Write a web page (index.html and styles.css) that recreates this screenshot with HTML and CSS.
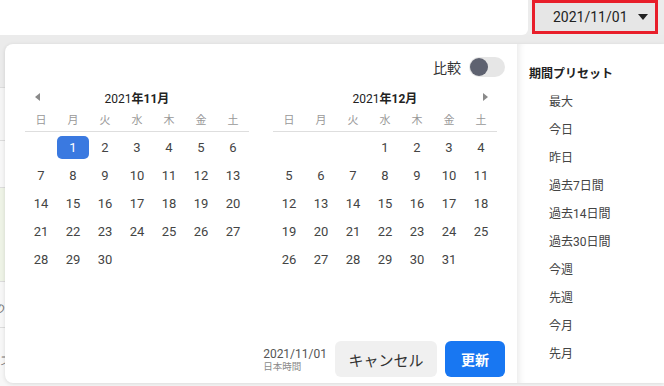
FILE: index.html
```html
<!DOCTYPE html>
<html lang="ja">
<head>
<meta charset="utf-8">
<link rel="stylesheet" href="styles.css">
</head>
<body>
<div class="page">
  <header class="topbar">
    <div class="search"></div>
    <button class="datebtn"><span>2021/11/01</span><svg width="10" height="6" viewBox="0 0 10 6"><path d="M0 0H10L5 6Z" fill="#222"/></svg></button>
  </header>
  <div class="rows">
    <div class="row r1"></div>
    <div class="row r2"></div>
    <div class="row r3"></div>
    <div class="row r4"></div>
    <div class="row r5"><span class="frag">データの</span></div>
    <div class="row r6"><span class="frag">グラフ</span></div>
  </div>
</div>

<div class="popup">
  <div class="calarea">
    <div class="cmp"><span>比較</span><span class="toggle"><span class="knob"></span></span></div>
    <div class="months">
      <div class="month">
        <div class="mhead"><svg class="nav prev" width="5" height="8" viewBox="0 0 5 8"><path d="M5 0V8L0 4Z" fill="#8a8a8a"/></svg><span class="mtitle">2021<b>年11月</b></span></div>
        <div class="grid dow"><span>日</span><span>月</span><span>火</span><span>水</span><span>木</span><span>金</span><span>土</span></div>
        <div class="grid days">
          <span></span><span><i class="sel">1</i></span><span>2</span><span>3</span><span>4</span><span>5</span><span>6</span>
          <span>7</span><span>8</span><span>9</span><span>10</span><span>11</span><span>12</span><span>13</span>
          <span>14</span><span>15</span><span>16</span><span>17</span><span>18</span><span>19</span><span>20</span>
          <span>21</span><span>22</span><span>23</span><span>24</span><span>25</span><span>26</span><span>27</span>
          <span>28</span><span>29</span><span>30</span>
        </div>
      </div>
      <div class="month">
        <div class="mhead"><span class="mtitle">2021<b>年12月</b></span><svg class="nav next" width="5" height="8" viewBox="0 0 5 8"><path d="M0 0V8L5 4Z" fill="#8a8a8a"/></svg></div>
        <div class="grid dow"><span>日</span><span>月</span><span>火</span><span>水</span><span>木</span><span>金</span><span>土</span></div>
        <div class="grid days">
          <span></span><span></span><span></span><span>1</span><span>2</span><span>3</span><span>4</span>
          <span>5</span><span>6</span><span>7</span><span>8</span><span>9</span><span>10</span><span>11</span>
          <span>12</span><span>13</span><span>14</span><span>15</span><span>16</span><span>17</span><span>18</span>
          <span>19</span><span>20</span><span>21</span><span>22</span><span>23</span><span>24</span><span>25</span>
          <span>26</span><span>27</span><span>28</span><span>29</span><span>30</span><span>31</span>
        </div>
      </div>
    </div>
    <div class="footer">
      <div class="fdate"><span class="fd">2021/11/01</span><span class="tz">日本時間</span></div>
      <button class="btn cancel">キャンセル</button>
      <button class="btn update">更新</button>
    </div>
  </div>
  <aside class="presets">
    <div class="phead">期間プリセット</div>
    <ul class="plist">
      <li>最大</li>
      <li>今日</li>
      <li>昨日</li>
      <li>過去7日間</li>
      <li>過去14日間</li>
      <li>過去30日間</li>
      <li>今週</li>
      <li>先週</li>
      <li>今月</li>
      <li>先月</li>
    </ul>
  </aside>
</div>
</body>
</html>
```
FILE: styles.css
```css
* { box-sizing: border-box; }
html, body {
  margin: 0;
  padding: 0;
}
body {
  width: 664px;
  height: 386px;
  overflow: hidden;
  position: relative;
  background: #ececec;
  font-family: Roboto, "Noto Sans CJK JP", sans-serif;
  color: #333;
}

/* background page */
.topbar {
  display: flex;
  gap: 4px;
  height: 35px;
}
.search {
  width: 528px;
  height: 35px;
  background: #fff;
  border-bottom-right-radius: 6px;
}
.datebtn {
  width: 126px;
  height: 34px;
  border: 3px solid #e81e2a;
  background: #e6e6e6;
  display: flex;
  align-items: center;
  justify-content: space-between;
  padding: 0 7px 0 18px;
  font-family: Roboto, sans-serif;
  font-size: 14px;
  color: #222;
  margin: 0;
}
.rows { display: flex; flex-direction: column; }
.row { border-bottom: 1px solid #dcdcdc; }
.r1 { height: 53px; background: #ebebeb; }
.r2 { height: 53px; background: #f5f5f5; }
.r3 { height: 47px; background: #f7f7f7; }
.r4 { height: 94px; background: #eef3e6; }
.r5 { height: 46px; background: #f7f7f7; padding-top: 21px; }
.r6 { height: 58px; background: #f7f7f7; padding-top: 27px; border-bottom: none; }
.frag {
  display: block;
  font-size: 12px;
  font-style: italic;
  color: #777;
  margin-left: -44px;
  line-height: 12px;
}
.r6 .frag { margin-left: -26px; }

/* popup */
.popup {
  position: absolute;
  left: 5px;
  top: 44px;
  right: 0;
  height: 339px;
  background: #fff;
  border-radius: 8px 0 0 8px;
  box-shadow: 0 1px 4px rgba(0, 0, 0, 0.12);
  display: flex;
}
.calarea {
  width: 512px;
  display: flex;
  flex-direction: column;
  padding: 13px 12px 6px 20px;
}
.cmp {
  display: flex;
  justify-content: flex-end;
  align-items: center;
  gap: 8px;
  height: 20px;
  font-size: 14px;
  color: #333;
}
.toggle {
  width: 36px;
  height: 20px;
  border-radius: 10px;
  background: #e6e6e6;
  display: flex;
  align-items: center;
  padding-left: 1px;
}
.knob {
  width: 18px;
  height: 18px;
  border-radius: 50%;
  background: #5e6270;
}
.months {
  display: flex;
  gap: 24px;
  margin-top: 9px;
}
.month { width: 224px; }
.mhead {
  position: relative;
  height: 22px;
  display: flex;
  align-items: center;
  justify-content: center;
  font-size: 12px;
  color: #222;
}
.mhead b { font-weight: 700; }
.nav { position: absolute; top: 7px; }
.prev { left: 10px; }
.next { right: 9px; }
.grid {
  display: grid;
  grid-template-columns: repeat(7, 32px);
}
.dow {
  height: 24px;
  border-bottom: 1px solid #dedede;
  font-size: 11px;
  color: #999;
  align-items: center;
  text-align: center;
  padding-bottom: 1px;
}
.days {
  padding-top: 1px;
  grid-auto-rows: 28px;
  font-size: 13px;
  color: #444;
}
.days span {
  display: flex;
  align-items: center;
  justify-content: center;
}
.sel {
  font-style: normal;
  width: 32px;
  height: 23px;
  border-radius: 5px;
  background: #3a79e0;
  color: #fff;
  display: flex;
  align-items: center;
  justify-content: center;
  margin-top: 1px;
}
.footer {
  margin-top: auto;
  display: flex;
  justify-content: flex-end;
  align-items: center;
  gap: 8px;
}
.fdate {
  display: flex;
  flex-direction: column;
  line-height: 13px;
  padding-top: 1px;
}
.fd { font-size: 12px; color: #555; }
.tz { font-size: 9.5px; color: #8a8a8a; line-height: 11px; }
.btn {
  height: 36px;
  border: none;
  border-radius: 6px;
  font-family: Roboto, "Noto Sans CJK JP", sans-serif;
  font-size: 14px;
  margin: 0;
}
.cancel {
  width: 102px;
  background: #f0f0f0;
  color: #333;
  font-size: 15px;
}
.update {
  width: 60px;
  background: #1877f2;
  color: #fff;
  font-weight: 700;
}

/* presets */
.presets {
  flex: 1;
  box-shadow: inset 7px 0 7px -5px rgba(0, 0, 0, 0.09);
  padding: 16px 0 0 12px;
}
.phead {
  font-size: 12px;
  font-weight: 700;
  color: #222;
  line-height: 28px;
}
.plist {
  list-style: none;
  margin: 0;
  padding: 0 0 0 20px;
}
.plist li {
  font-size: 12px;
  color: #444;
  line-height: 28px;
}
```
